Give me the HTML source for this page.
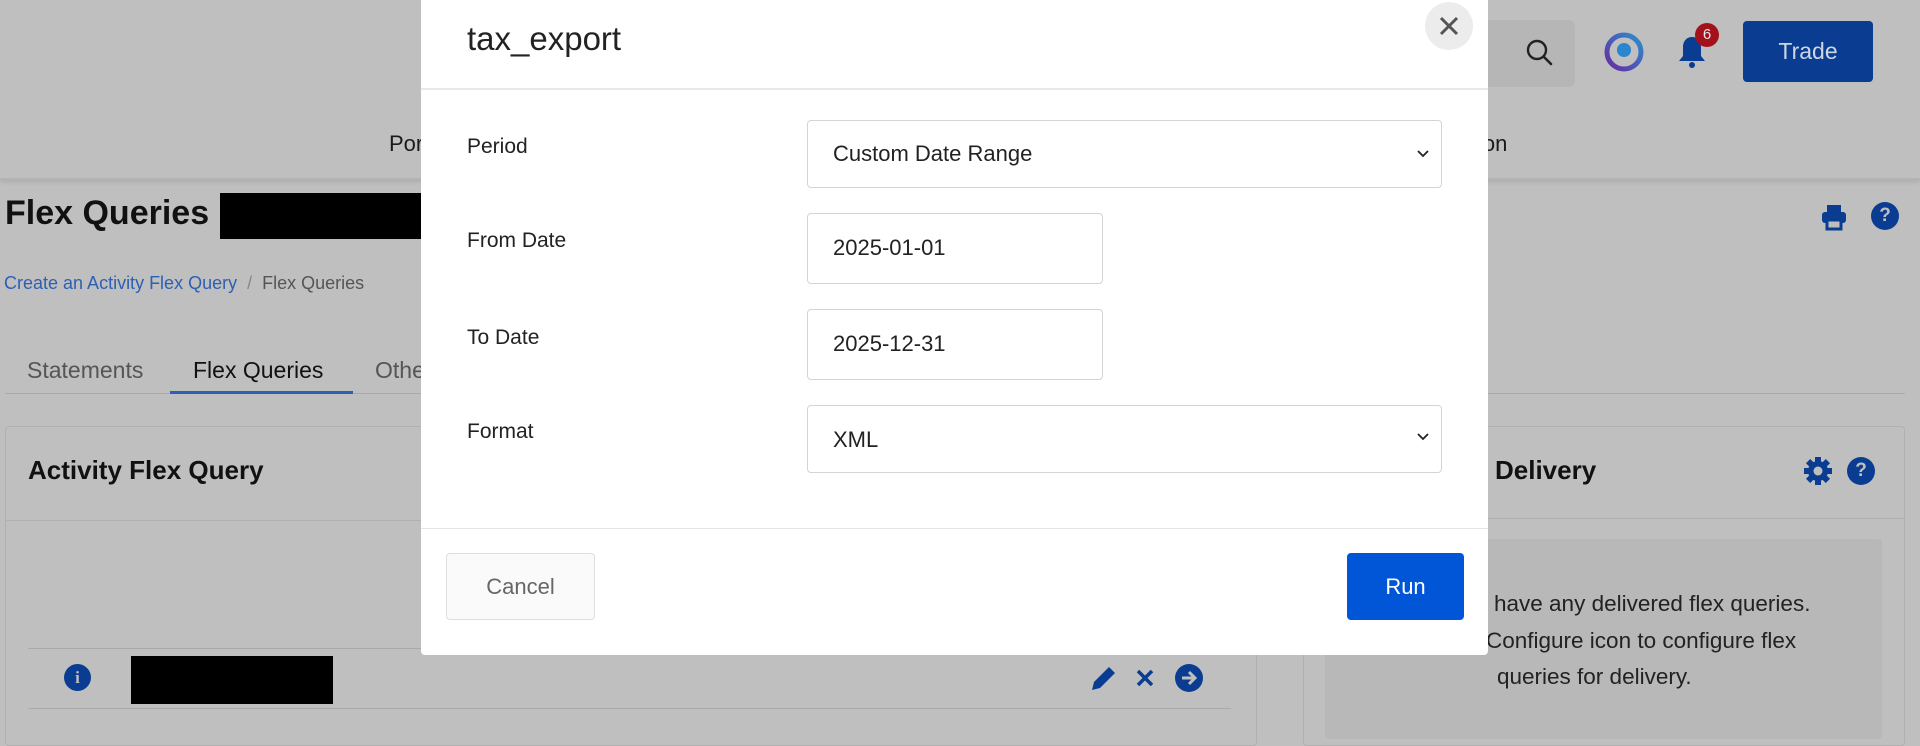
<!DOCTYPE html>
<html><head><meta charset="utf-8"><style>
*{box-sizing:border-box;margin:0;padding:0}
body{width:1920px;height:716px;overflow:hidden;background:#bfbfbf;font-family:"Liberation Sans",sans-serif;position:relative;color:#1a1a1a}
.a{position:absolute}
.t{position:absolute;white-space:nowrap}
</style></head><body>
<div class="a" style="left:0;top:0;width:1920px;height:180px;background:#bfbfbf;border-bottom:2px solid #b3b3b3;box-shadow:0 2px 4px rgba(0,0,0,.1)"></div>
<div class="a" style="left:1440px;top:20px;width:135px;height:67px;background:#b6b6b6;border-radius:6px"></div>
<svg class="a" style="left:1524px;top:37px" width="32" height="32" viewBox="0 0 32 32"><circle cx="13" cy="13" r="9" fill="none" stroke="#222" stroke-width="2.4"/><path d="M20 20l7 7" stroke="#222" stroke-width="2.6" stroke-linecap="round"/></svg>
<svg class="a" style="left:1603px;top:31px" width="42" height="42" viewBox="0 0 42 42"><defs><linearGradient id="g" x1="0" y1="1" x2="1" y2="0"><stop offset="0" stop-color="#6a2aa0"/><stop offset="1" stop-color="#2a8fd0"/></linearGradient></defs><circle cx="21" cy="21" r="17" fill="none" stroke="url(#g)" stroke-width="5"/><circle cx="21" cy="19" r="7" fill="#2a86cf"/></svg>
<svg class="a" style="left:1675px;top:33px" width="34" height="38" viewBox="0 0 34 38"><path d="M17 4c-6 0-9 5-9 10v9l-4 5h26l-4-5v-9c0-5-3-10-9-10z" fill="#0a3d91"/><circle cx="17" cy="32" r="3" fill="#0a3d91"/></svg>
<div class="a" style="left:1695px;top:23px;width:24px;height:24px;border-radius:50%;background:#a3111b;color:#e8e8e8;font-size:15px;text-align:center;line-height:24px">6</div>
<div class="a" style="left:1743px;top:21px;width:130px;height:61px;background:#0a3d91;border-radius:4px;color:#cfd6e3;font-size:23px;text-align:center;line-height:61px">Trade</div>
<div class="t" style="left:389px;top:131px;font-size:22px">Por</div>
<div class="t" style="left:1478px;top:131px;font-size:22px">ion</div>

<div class="t" style="left:5px;top:194px;font-size:34px;font-weight:bold;color:#111">Flex Queries</div>
<div class="a" style="left:220px;top:193px;width:202px;height:46px;background:#000"></div>
<svg class="a" style="left:1820px;top:203px" width="28" height="28" viewBox="0 0 28 28"><rect x="7" y="2" width="14" height="7" fill="#0a3d91"/><rect x="2" y="9" width="24" height="11" rx="3" fill="#0a3d91"/><rect x="7" y="17" width="14" height="9" fill="#bfbfbf" stroke="#0a3d91" stroke-width="3"/></svg>
<div class="a" style="left:1871px;top:202px;width:28px;height:28px;border-radius:50%;background:#0a3d91;color:#bfbfbf;font-weight:bold;font-size:19px;text-align:center;line-height:28px">?</div>
<div class="t" style="left:4px;top:273px;font-size:18px;color:#2d5fb4">Create an Activity Flex Query <span style="color:#888">&nbsp;/&nbsp;&nbsp;</span><span style="color:#555">Flex Queries</span></div>
<div class="a" style="left:5px;top:393px;width:1900px;height:1px;background:#aaa"></div>
<div class="t" style="left:27px;top:357px;font-size:23px;color:#555">Statements</div>
<div class="t" style="left:193px;top:357px;font-size:23px;color:#111">Flex Queries</div>
<div class="t" style="left:375px;top:357px;font-size:23px;color:#555">Other</div>
<div class="a" style="left:170px;top:391px;width:183px;height:3px;background:#2d5fb4"></div>

<div class="a" style="left:5px;top:426px;width:1252px;height:320px;border:1px solid #b0b0b0;border-radius:4px"></div>
<div class="a" style="left:5px;top:520px;width:1252px;height:1px;background:#b0b0b0"></div>
<div class="t" style="left:28px;top:455px;font-size:26px;font-weight:bold;color:#111">Activity Flex Query</div>
<div class="a" style="left:28px;top:648px;width:1203px;height:1px;background:#aaa"></div>
<div class="a" style="left:28px;top:708px;width:1203px;height:1px;background:#aaa"></div>
<div class="a" style="left:64px;top:664px;width:27px;height:27px;border-radius:50%;background:#0a3d91;color:#bfbfbf;font-weight:bold;font-size:17px;text-align:center;line-height:27px;font-family:'Liberation Serif',serif">i</div>
<div class="a" style="left:131px;top:656px;width:202px;height:48px;background:#000"></div>
<svg class="a" style="left:1088px;top:664px" width="30" height="30" viewBox="0 0 30 30"><path d="M4 26l2-8 15-15 6 6-15 15z" fill="#0a3d91"/></svg>
<svg class="a" style="left:1134px;top:667px" width="22" height="22" viewBox="0 0 22 22"><path d="M4 4l14 14M18 4L4 18" stroke="#0a3d91" stroke-width="3.5"/></svg>
<svg class="a" style="left:1174px;top:663px" width="30" height="30" viewBox="0 0 30 30"><circle cx="15" cy="15" r="14" fill="#0a3d91"/><path d="M8 15h13M15 9l6 6-6 6" stroke="#bfbfbf" stroke-width="3" fill="none"/></svg>

<div class="a" style="left:1303px;top:426px;width:602px;height:320px;border:1px solid #b0b0b0;border-radius:4px"></div>
<div class="a" style="left:1303px;top:518px;width:602px;height:1px;background:#b0b0b0"></div>
<div class="t" style="left:1495px;top:455px;font-size:26px;font-weight:bold;color:#111">Delivery</div>
<svg class="a" style="left:1803px;top:456px" width="30" height="30" viewBox="0 0 30 30"><g fill="#0a3d91"><circle cx="15" cy="15" r="10"/><rect x="12" y="1" width="6" height="28"/><rect x="1" y="12" width="28" height="6"/><rect x="12" y="1" width="6" height="28" transform="rotate(45 15 15)"/><rect x="12" y="1" width="6" height="28" transform="rotate(-45 15 15)"/></g><circle cx="15" cy="15" r="4.5" fill="#bfbfbf"/></svg>
<div class="a" style="left:1847px;top:457px;width:28px;height:28px;border-radius:50%;background:#0a3d91;color:#bfbfbf;font-weight:bold;font-size:19px;text-align:center;line-height:28px">?</div>
<div class="a" style="left:1325px;top:539px;width:557px;height:200px;background:#b8b8b8;border-radius:4px"></div>
<div class="t" style="left:1494px;top:591px;font-size:22.5px;color:#222">have any delivered flex queries.</div>
<div class="t" style="left:1486px;top:628px;font-size:22.5px;color:#222">Configure icon to configure flex</div>
<div class="t" style="left:1497px;top:664px;font-size:22.5px;color:#222">queries for delivery.</div>

<div class="a" style="left:421px;top:0;width:1067px;height:655px;background:#fff;border-radius:0 0 4px 4px">
  <div class="t" style="left:46px;top:20px;font-size:33px;color:#222">tax_export</div>
  <div class="a" style="left:1004px;top:2px;width:48px;height:48px;border-radius:50%;background:#ececec"></div>
  <svg class="a" style="left:1017px;top:15px" width="22" height="22" viewBox="0 0 22 22"><path d="M3 3l16 16M19 3L3 19" stroke="#555" stroke-width="3"/></svg>
  <div class="a" style="left:0;top:88px;width:1067px;height:2px;background:#e8e8e8"></div>
  <div class="t" style="left:46px;top:135px;font-size:21px;color:#222">Period</div>
  <div class="t" style="left:46px;top:229px;font-size:21px;color:#222">From Date</div>
  <div class="t" style="left:46px;top:326px;font-size:21px;color:#222">To Date</div>
  <div class="t" style="left:46px;top:420px;font-size:21px;color:#222">Format</div>
  <div class="a" style="left:386px;top:120px;width:635px;height:68px;border:1px solid #d4d4d4;border-radius:4px"></div>
  <div class="t" style="left:412px;top:141px;font-size:22px;color:#222">Custom Date Range</div>
  <svg class="a" style="left:996px;top:149px" width="12" height="10" viewBox="0 0 12 10"><path d="M1 2l5 5 5-5" stroke="#222" stroke-width="1.8" fill="none"/></svg>
  <div class="a" style="left:386px;top:213px;width:296px;height:71px;border:1px solid #d4d4d4;border-radius:4px"></div>
  <div class="t" style="left:412px;top:235px;font-size:22px;color:#222">2025-01-01</div>
  <div class="a" style="left:386px;top:309px;width:296px;height:71px;border:1px solid #d4d4d4;border-radius:4px"></div>
  <div class="t" style="left:412px;top:331px;font-size:22px;color:#222">2025-12-31</div>
  <div class="a" style="left:386px;top:405px;width:635px;height:68px;border:1px solid #d4d4d4;border-radius:4px"></div>
  <div class="t" style="left:412px;top:427px;font-size:22px;color:#222">XML</div>
  <svg class="a" style="left:996px;top:432px" width="12" height="10" viewBox="0 0 12 10"><path d="M1 2l5 5 5-5" stroke="#222" stroke-width="1.8" fill="none"/></svg>
  <div class="a" style="left:0;top:528px;width:1067px;height:1px;background:#e4e4e4"></div>
  <div class="a" style="left:25px;top:553px;width:149px;height:67px;border:1px solid #ddd;border-radius:4px;background:#fafafa;color:#666;font-size:22px;text-align:center;line-height:65px">Cancel</div>
  <div class="a" style="left:926px;top:553px;width:117px;height:67px;border-radius:4px;background:#0056d6;color:#fff;font-size:22px;text-align:center;line-height:67px">Run</div>
</div>
</body></html>
